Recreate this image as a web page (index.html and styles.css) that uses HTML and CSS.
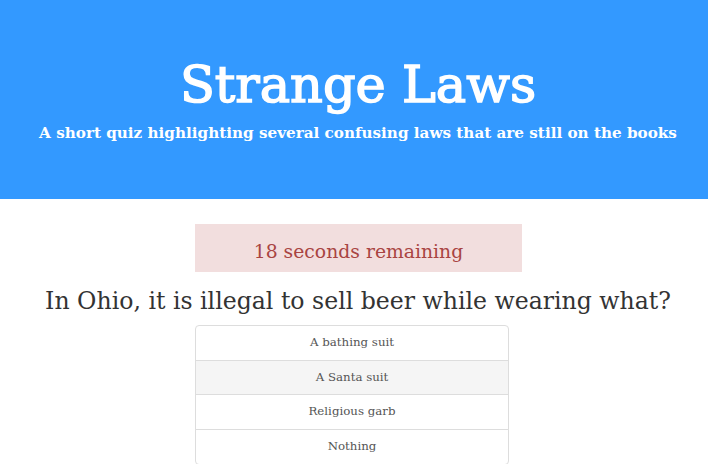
FILE: index.html
```html
<!DOCTYPE html>
<html>
<head>
<meta charset="utf-8">
<link rel="stylesheet" href="styles.css">
</head>
<body>
<header class="hero">
  <h1 class="title">Strange Laws</h1>
  <p class="subtitle">A short quiz highlighting several confusing laws that are still on the books</p>
</header>
<main class="quiz">
  <div class="timer">18 seconds remaining</div>
  <h2 class="question">In Ohio, it is illegal to sell beer while wearing what?</h2>
  <ul class="answers">
    <li class="answer">A bathing suit</li>
    <li class="answer hover">A Santa suit</li>
    <li class="answer">Religious garb</li>
    <li class="answer">Nothing</li>
  </ul>
</main>
</body>
</html>
```
FILE: styles.css
```css
html, body {
  margin: 0;
  padding: 0;
  background: #fff;
  font-family: "DejaVu Serif", "Liberation Serif", serif;
}
.hero {
  background: #3399ff;
  color: #fff;
  height: 199px;
  box-sizing: border-box;
  padding: 51px 0 0 8px;
  text-align: center;
}
.title {
  margin: 0;
  font-size: 51px;
  line-height: 68px;
  font-weight: normal;
  -webkit-text-stroke: 1.5px #fff;
}
.subtitle {
  margin: 2px 0 0;
  font-size: 15.2px;
  line-height: 24px;
  font-weight: bold;
}
.quiz {
  display: flex;
  flex-direction: column;
  padding-top: 25px;
}
.timer {
  margin-left: 195px;
  width: 327px;
  height: 48px;
  box-sizing: border-box;
  background: #f2dede;
  color: #a94442;
  font-size: 18.8px;
  line-height: 48px;
  text-align: center;
  padding-top: 4px;
}
.question {
  margin: 11px 0 0 8px;
  text-align: center;
  color: #333;
  font-weight: normal;
  font-size: 23.6px;
  line-height: 36px;
}
.answers {
  list-style: none;
  margin: 6px 0 0 195px;
  padding: 0;
  width: 314px;
  box-sizing: border-box;
}
.answer {
  border: 1px solid #ddd;
  margin-bottom: -1px;
  padding: 7px 15px;
  line-height: 19.7px;
  font-size: 11.8px;
  color: #555;
  text-align: center;
  background: #fff;
}
.answer:first-child {
  border-radius: 4px 4px 0 0;
}
.answer:last-child {
  border-radius: 0 0 4px 4px;
}
.answer.hover {
  background: #f5f5f5;
}
```
